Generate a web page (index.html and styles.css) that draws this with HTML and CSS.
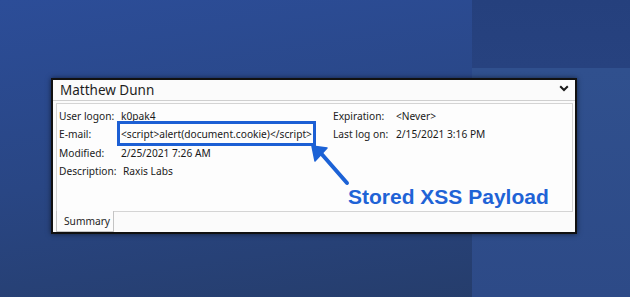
FILE: index.html
```html
<!DOCTYPE html>
<html lang="en">
<head>
  <meta charset="UTF-8" />
  <title>Matthew Dunn</title>
  <link rel="stylesheet" href="styles.css">
</head>
<body>
  <div class="dialog">
    <div class="title-bar">
      <span class="title">Matthew Dunn</span>
      <svg class="chevron" width="10" height="7" viewBox="0 0 10 7">
        <polyline points="1.2,1.2 5,5 8.8,1.2" fill="none" stroke="#1a1a1a" stroke-width="2"/>
      </svg>
    </div>

    <div class="panel">
      <div class="props">
        <span class="label">User logon:</span><span>k0pak4</span>
        <span class="label">Expiration:</span><span>&lt;Never&gt;</span>

        <span class="label">E-mail:</span><span><span class="payload">&lt;script&gt;alert(document.cookie)&lt;/script&gt;</span></span>
        <span class="label">Last log on:</span><span>2/15/2021 3:16 PM</span>

        <span class="label">Modified:</span><span>2/25/2021 7:26 AM</span>
        <span></span><span></span>

        <span class="label">Description:</span><span class="desc">Raxis Labs</span>
        <span></span><span></span>
      </div>
    </div>

    <div class="tabs">
      <span class="tab">Summary</span>
    </div>

    <!-- annotation drawn over the dialog -->
    <svg class="arrow" width="526" height="156" viewBox="0 0 526 156">
      <line x1="294" y1="103" x2="266" y2="71" stroke="#1c62d6" stroke-width="4" stroke-linecap="round"/>
      <polygon points="259,66 274,68 262,81" fill="#1c62d6" stroke="#1c62d6" stroke-width="1.5" stroke-linejoin="round"/>
    </svg>
    <span class="callout">Stored XSS Payload</span>
  </div>
</body>
</html>
```

FILE: styles.css
```css
* { box-sizing: border-box; margin: 0; padding: 0; }

body {
  width: 630px;
  height: 297px;
  overflow: hidden;
  padding: 78px 0 0 51px;
  font-family: "Noto Sans", "Open Sans", sans-serif;
  color: #222;
  background:
    linear-gradient(#25407d, #27427f) 472px 0 / 158px 68px no-repeat,
    linear-gradient(#30508e, #2d4a87) 472px 68px / 158px 229px no-repeat,
    linear-gradient(172deg, #2c4d98 0%, #294684 50%, #253c69 100%);
}

.dialog {
  position: relative;
  width: 526px;
  height: 156px;
  border: 2px solid #111;
  background: #fbfbfb;
  box-shadow: 0 0 5px rgba(0, 0, 0, 0.55);
  display: flex;
  flex-direction: column;
}

.title-bar {
  height: 21px;
  display: flex;
  align-items: center;
  justify-content: space-between;
  padding: 0 6px 0 7px;
  border-bottom: 1px solid #cfcfcf;
}

.title {
  font-size: 13.5px;
  color: #1e1e1e;
}

.chevron {
  margin-top: -3px;
}

.panel {
  height: 109px;
  margin: 2px 2px 0 3px;
  border: 1px solid #d4d4d4;
  background: #fdfdfd;
  padding: 3px 2px 0;
}

.props {
  display: grid;
  grid-template-columns: 62px 212px 63px 1fr;
  grid-auto-rows: 18.3px;
  align-items: center;
  font-size: 10.2px;
  color: #1a1a1a;
}

.label {
  color: #222;
}

.desc {
  padding-left: 2px;
}

.payload {
  display: inline-block;
  padding: 3px 1px 2px;
  margin: -3px -1px -2px;
  outline: 3px solid #1c5fd4;
  outline-offset: 0;
}

.tabs {
  flex: 1;
  padding-left: 3px;
  display: flex;
}

.tab {
  width: 58px;
  border: 1px solid #c4c4c4;
  border-top: none;
  background: #fcfcfc;
  font-size: 10.2px;
  color: #1e1e1e;
  padding: 3px 0 0 7px;
  margin-top: -1px;
}

.arrow {
  position: absolute;
  left: 0;
  top: 0;
  pointer-events: none;
}

.callout {
  position: absolute;
  left: 295px;
  top: 106px;
  font-family: "Liberation Sans", Arial, sans-serif;
  font-weight: bold;
  font-size: 21px;
  line-height: 21px;
  color: #1f63d6;
  white-space: nowrap;
}
```
